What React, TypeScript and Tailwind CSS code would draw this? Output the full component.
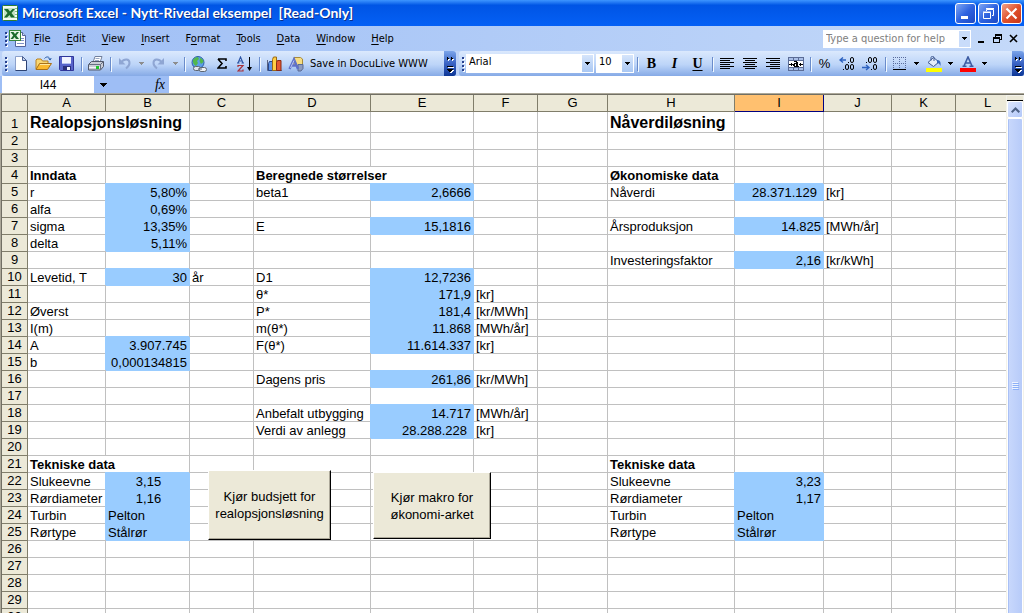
import React from "react";
import { clsx } from "clsx";

const UI = "font-['DejaVu_Sans_Condensed','DejaVu_Sans',sans-serif]";

/* ---------- Small shared pieces ---------- */

function Grip() {
  return (
    <span className="flex w-[4px] shrink-0 flex-col gap-[2px]" aria-hidden="true">
      {[0, 1, 2, 3].map((i) => (
        <span key={i} className="h-[2px] w-[2px] bg-[#27418f] shadow-[1px_1px_0_#ffffff]" />
      ))}
    </span>
  );
}

function Separator() {
  return (
    <span className="flex w-[6px] shrink-0 justify-center" aria-hidden="true">
      <span className="h-[14px] w-px bg-[#6a8ccb] shadow-[1px_1px_0_#f1f9ff]" />
    </span>
  );
}

function Caret({ className }: { className?: string }) {
  return (
    <svg width="5" height="3" viewBox="0 0 5 3" className={className} shapeRendering="crispEdges" aria-hidden="true">
      <path d="M0 0h5v1H4v1H3v1H2V2H1V1H0z" fill="currentColor" />
    </svg>
  );
}

function ToolButton({ label, children }: { label: string; children: React.ReactNode }) {
  return (
    <button type="button" aria-label={label} className="flex h-[22px] w-[23px] shrink-0 items-center justify-center text-black">
      {children}
    </button>
  );
}

function DropButton({ label, dim }: { label: string; dim?: boolean }) {
  return (
    <button
      type="button"
      aria-label={label}
      className={clsx("flex h-[22px] w-[11px] shrink-0 items-center justify-center", dim ? "text-[#8d8d8d]" : "text-black")}
    >
      <Caret />
    </button>
  );
}

function Overflow({ label }: { label: string }) {
  return (
    <button
      type="button"
      aria-label={label}
      className="flex w-[12px] shrink-0 items-center justify-center self-stretch rounded-r-[3px] bg-linear-to-b from-[#7ba4ea] via-[#3a63c4] to-[#0b3696]"
    >
      <svg width="9" height="20" viewBox="0 0 9 20" shapeRendering="crispEdges" aria-hidden="true">
        <path d="M2 4h1v1h1v1H3v1H2zM6 4h1v1h1v1H7v1H6z" fill="#fff" />
        <path d="M1 3h1v1h1v1H2v1H1zM5 3h1v1h1v1H6v1H5z" fill="#000" />
        <path d="M2 13h6v1H2zM2 16h6v1H7v1H6v1H4v-1H3v-1H2z" fill="#fff" />
        <path d="M1 12h6v1H1zM1 15h6v1H6v1H5v1H3v-1H2v-1H1z" fill="#000" />
      </svg>
    </button>
  );
}

/* ---------- Icons ---------- */

function ExcelIcon() {
  return (
    <svg width="16" height="16" viewBox="0 0 16 16" aria-hidden="true">
      <rect x="0.5" y="0.5" width="15" height="15" rx="1" fill="#f4fbf2" stroke="#2f7d32" />
      <path d="M12 3.5h3M12 6.5h3M12 9.5h3M12 12.5h3" stroke="#86b886" />
      <rect x="2" y="3" width="11" height="10" fill="#c5e3c4" />
      <path d="M2 4h4l2 2.500L10.500 4H13L9.500 8l3.500 4.500H9L7.500 10 5 12.500H2L5.500 8z" fill="#1d6b2c" />
    </svg>
  );
}

function WorkbookIcon() {
  return (
    <svg width="18" height="17" viewBox="0 0 18 17" aria-hidden="true">
      <path d="M6.500 2.500h7l3 3v11h-10z" fill="#fff" stroke="#52649c" />
      <path d="M13.500 2.500v3h3" fill="#cdd9f3" stroke="#52649c" />
      <path d="M12 8.500h3M12 10.500h3M8 13.500h7" stroke="#7f92c6" />
      <rect x="0.500" y="0.500" width="11" height="10" fill="#e9f6e6" stroke="#38863c" />
      <path d="M1.500 2h3L6 4l1.800-2H10L7.300 5.500 10 9H7L5.500 7 4 9H1.500l2.700-3.500z" fill="#1d6b2c" />
    </svg>
  );
}

function NewIcon() {
  return (
    <svg width="12" height="15" viewBox="0 0 12 15" aria-hidden="true">
      <path d="M0.5 0.5h7l4 4v10h-11z" fill="#fff" stroke="#8ba0cb" />
      <path d="M11.5 4.5v10h-11" fill="none" stroke="#2c4273" />
      <path d="M7.5 0.5v4h4z" fill="#c3d2ee" stroke="#4a5f91" />
    </svg>
  );
}

function OpenIcon() {
  return (
    <svg width="17" height="15" viewBox="0 0 17 15" aria-hidden="true">
      <path d="M9.5 2.5c2-2.4 5-2 5.5 1M13.500 2.500l1.700 1.500 1-2" fill="none" stroke="#2c5ea8" />
      <path d="M1 13V4l1-1h4l1.500 2H13v3" fill="#f8d775" stroke="#b98121" />
      <path d="M1 13.500L4.500 7.500h12L12.500 13.500z" fill="#fbb92f" stroke="#a8701a" />
      <path d="M5 8.500h10" stroke="#ffe9a4" />
    </svg>
  );
}

function SaveIcon() {
  return (
    <svg width="15" height="15" viewBox="0 0 15 15" aria-hidden="true">
      <path d="M0.500 0.500h14v14h-13l-1-1z" fill="#5763c9" stroke="#30369a" />
      <rect x="3" y="1" width="9" height="7" fill="#f1f3ff" />
      <path d="M3 7.500h9" stroke="#b7c1ee" />
      <rect x="4" y="10" width="8" height="4" fill="#2a2f79" />
      <rect x="8" y="11" width="3" height="3" fill="#f3f5ff" />
    </svg>
  );
}

function PrintIcon() {
  return (
    <svg width="16" height="15" viewBox="0 0 16 15" aria-hidden="true">
      <path d="M5 6.500L7 0.500h7L12 6.500z" fill="#fff" stroke="#72809c" />
      <path d="M7.500 2.500h4M7 4.500h4" stroke="#9aa8c4" />
      <path d="M0.500 8.500l3-3h12v5l-3 3.500H0.500z" fill="#c9cdd6" stroke="#50586a" />
      <path d="M1 8.500h11.500l3-3M12.500 8.500V14" fill="none" stroke="#667083" />
      <path d="M1 11.500h11" stroke="#f3f5fa" />
      <rect x="8" y="10" width="3" height="3" fill="#1fc72a" />
    </svg>
  );
}

function UndoIcon({ flip }: { flip?: boolean }) {
  return (
    <svg width="13" height="13" viewBox="0 0 13 13" aria-hidden="true">
      <g transform={flip ? "translate(13 0) scale(-1 1)" : undefined}>
        <path d="M3 5.500c3-4 8.500-4 8.500 0.500 0 2.500-1.500 4-3.500 5.500" fill="none" stroke="#8fa6d3" strokeWidth="2" />
        <path d="M1 1v6.500h6.500z" fill="#8fa6d3" />
      </g>
    </svg>
  );
}

function GlobeIcon() {
  return (
    <svg width="16" height="16" viewBox="0 0 16 16" aria-hidden="true">
      <circle cx="7" cy="6.500" r="6" fill="#5b9ee8" stroke="#2d5fa6" />
      <path d="M2 4c1-2 3-3 5-3l1 2-2 2 1 2-2 3C3 9 1.500 7 2 4zM9 2c2 .5 3.500 2 3.500 4L10 8 8.500 5z" fill="#52b84c" />
      <rect x="2.500" y="10.500" width="7" height="4" rx="2" fill="#dfe5ef" stroke="#5d6672" strokeWidth="1" />
      <rect x="8" y="11.500" width="7.500" height="4" rx="2" fill="#eef1f6" stroke="#5d6672" strokeWidth="1" />
      <path d="M7 13h4" stroke="#5d6672" />
    </svg>
  );
}

function SumIcon() {
  return (
    <svg width="10" height="11" viewBox="0 0 10 11" aria-hidden="true">
      <path d="M1 1h8v2M9 8v2H1l4-4.500L1 1" fill="none" stroke="#000" strokeWidth="1.600" />
    </svg>
  );
}

function SortIcon() {
  return (
    <svg width="16" height="16" viewBox="0 0 16 16" aria-hidden="true">
      <path d="M1 7L3.500 1 6 7M2 5h3.500M0 7h2.500M4.500 7H7" fill="none" stroke="#2d55a5" strokeWidth="1.100" />
      <path d="M1 11V9.500h5L1 15h5v-1.500" fill="none" stroke="#a8313a" strokeWidth="1.200" />
      <path d="M12.500 1v13" stroke="#000" />
      <path d="M10 11h5l-2.500 4z" fill="#000" />
    </svg>
  );
}

function ChartIcon() {
  return (
    <svg width="16" height="16" viewBox="0 0 16 16" aria-hidden="true">
      <path d="M1.500 4v10.500H16" fill="none" stroke="#5a6482" />
      <path d="M2.500 7.500l1-2h3v9h-4z" fill="#5e93e6" stroke="#27488f" />
      <path d="M6.500 3.500l1-2.500h3v13.500h-4z" fill="#ffcf45" stroke="#9b6a14" />
      <path d="M10.500 6.500l1-2h3.500v10h-4.500z" fill="#e4572e" stroke="#8a2a14" />
    </svg>
  );
}

function ShapesIcon() {
  return (
    <svg width="16" height="16" viewBox="0 0 16 16" aria-hidden="true">
      <path d="M6 1.500h6.500l2 1.500v5l-2 1.500H6z" fill="#f6dd84" stroke="#a88b3a" />
      <path d="M10 8.500h5v4l-2 2.500h-3z" fill="#8d9cc0" stroke="#5a6a94" />
      <path d="M1.500 13L6 3.500 10 13M3.500 9.500h5.500" fill="none" stroke="#5f70c9" strokeWidth="2.400" />
      <path d="M2.500 12L6 4.500" stroke="#b9c5f5" />
    </svg>
  );
}

function Lines({ rows }: { rows: [number, number][] }) {
  return (
    <svg width="14" height="11" viewBox="0 0 14 11" shapeRendering="crispEdges" aria-hidden="true">
      {rows.map(([x, w], i) => (
        <rect key={i} x={x} y={i * 2} width={w} height="1" fill="#000" />
      ))}
    </svg>
  );
}

function MergeIcon() {
  return (
    <svg width="16" height="14" viewBox="0 0 16 14" shapeRendering="crispEdges" aria-hidden="true">
      <rect x="0" y="0" width="16" height="14" fill="#a9bfe8" />
      <path d="M0 0.500h16M0 13.500h16M0.500 0v14M15.500 0v14M5.500 0v3M10.500 0v3M5.500 11v3M10.500 11v3M0 3.500h16M0 10.500h16" stroke="#5b6c96" />
      <rect x="1" y="4" width="14" height="6" fill="#fff" />
      <path d="M1 7h4v1H1zM3 6h1v3H3zM11 7h4v1h-4zM12 6h1v3h-1z" fill="#000" />
      <path d="M6 4h3v1H6zM8 5h2v4H8zM6 6h2v1H6zM5 7h2v2H5zM6 9h5v1H6z" fill="#000" />
    </svg>
  );
}

function DecimalIcon({ less }: { less?: boolean }) {
  return (
    <svg width="17" height="14" viewBox="0 0 17 14" aria-hidden="true">
      {less ? (
        <>
          <path d="M0 10.500h6M4 8l3 2.500L4 13" fill="none" stroke="#2d62c0" strokeWidth="1.400" />
          <rect x="4" y="5" width="1" height="1" />
          <rect x="6.500" y="0.500" width="3" height="5" rx="1.500" fill="none" stroke="#000" />
          <rect x="11.500" y="0.500" width="3" height="5" rx="1.500" fill="none" stroke="#000" />
          <rect x="9" y="12" width="1" height="1" />
          <rect x="11.500" y="7.500" width="3" height="5" rx="1.500" fill="none" stroke="#000" />
        </>
      ) : (
        <>
          <path d="M1 3h6M4 0.500L1 3l3 2.500" fill="none" stroke="#2d62c0" strokeWidth="1.400" />
          <rect x="9" y="5" width="1" height="1" />
          <rect x="11.500" y="0.500" width="3" height="5" rx="1.500" fill="none" stroke="#000" />
          <rect x="4" y="12" width="1" height="1" />
          <rect x="6.500" y="7.500" width="3" height="5" rx="1.500" fill="none" stroke="#000" />
          <rect x="11.500" y="7.500" width="3" height="5" rx="1.500" fill="none" stroke="#000" />
        </>
      )}
    </svg>
  );
}

function BordersIcon() {
  return (
    <svg width="13" height="13" viewBox="0 0 13 13" shapeRendering="crispEdges" aria-hidden="true">
      <path d="M0 0.500h13M0 6.500h13M0.500 0v12M6.500 0v12M12.500 0v12" stroke="#5a6c9c" strokeDasharray="1 1" />
      <path d="M0 12.500h13" stroke="#000" />
    </svg>
  );
}

function FillIcon() {
  return (
    <svg width="16" height="16" viewBox="0 0 16 16" aria-hidden="true">
      <path d="M2 6.500L7.500 1.500 13 6 7.500 10.500z" fill="#e3ecfb" stroke="#3f588f" />
      <path d="M5 4.500V1.500c0-1.500 3-1.500 3 0V5" fill="none" stroke="#3f588f" />
      <path d="M11 4c3 0 4 2 3.500 6-1-2-1.500-3-3.500-3z" fill="#3567bd" />
      <rect x="0" y="12" width="16" height="4" fill="#ffff00" />
    </svg>
  );
}

function FontColorIcon() {
  return (
    <svg width="16" height="16" viewBox="0 0 16 16" aria-hidden="true">
      <path d="M4 10L8 1l4 9M5.500 7h5M2.500 10.200h4M9.500 10.200h4" fill="none" stroke="#3c5ba2" strokeWidth="1.600" />
      <rect x="0" y="12" width="16" height="4" fill="#ff0000" />
    </svg>
  );
}

/* ---------- Window chrome ---------- */

function CaptionButton({ label, close, children }: { label: string; close?: boolean; children: React.ReactNode }) {
  return (
    <button
      type="button"
      aria-label={label}
      className={clsx(
        "flex h-[21px] w-[21px] items-center justify-center rounded-[3px] border border-white bg-linear-to-br",
        close ? "from-[#f0a188] via-[#e0512b] to-[#c8361a]" : "from-[#7fa5f3] via-[#2f63e0] to-[#1c48c4]",
      )}
    >
      <svg width="15" height="15" viewBox="0 0 15 15" aria-hidden="true">
        {children}
      </svg>
    </button>
  );
}

function TitleBar() {
  return (
    <header className="flex h-[26px] shrink-0 items-center gap-[4px] bg-linear-to-b from-[#3d95ff] via-[#0055e5] via-20% to-[#0560f5] pr-[2px] pl-[2px]">
      <ExcelIcon />
      <h1 className="flex-1 truncate font-['Lato','Open_Sans',sans-serif] text-[14px] leading-[20px] font-bold whitespace-pre text-white [text-shadow:1px_1px_0_#0b2f8a]">
        {"Microsoft Excel - Nytt-Rivedal eksempel  [Read-Only]"}
      </h1>
      <div className="flex gap-[2px]">
        <CaptionButton label="Minimize">
          <path d="M3 10h7v3H3z" fill="#fff" />
        </CaptionButton>
        <CaptionButton label="Restore">
          <path d="M5.500 5V3.500h7v6H11M5 2.500h8" fill="none" stroke="#fff" />
          <path d="M2.500 6.500h7v6h-7zM2 6h8" fill="none" stroke="#fff" />
        </CaptionButton>
        <CaptionButton label="Close" close>
          <path d="M2.500 2.500l10 10M12.500 2.500l-10 10" stroke="#fff" strokeWidth="2.200" />
        </CaptionButton>
      </div>
    </header>
  );
}

const MENUS: [string, string, string][] = [
  ["", "F", "ile"],
  ["", "E", "dit"],
  ["", "V", "iew"],
  ["", "I", "nsert"],
  ["F", "o", "rmat"],
  ["", "T", "ools"],
  ["", "D", "ata"],
  ["", "W", "indow"],
  ["", "H", "elp"],
];

function MenuBar() {
  return (
    <div className="flex h-[25px] shrink-0 items-center bg-linear-to-r from-[#9ebef5] to-[#c4d9f9] pr-[3px] pl-[5px]">
      <Grip />
      <WorkbookIcon />
      <nav className="ml-[7px] flex flex-1 gap-[16px]">
        {MENUS.map(([pre, key, post]) => (
          <button key={pre + key + post} type="button" className="text-[11px] leading-[16px] text-black">
            {pre}
            <span className="underline underline-offset-2">{key}</span>
            {post}
          </button>
        ))}
      </nav>
      <div className="flex h-[18px] w-[148px] border border-white bg-white">
        <input
          type="text"
          aria-label="Type a question for help"
          placeholder="Type a question for help"
          className="min-w-0 flex-1 pl-[2px] text-[11px] leading-[16px] text-black outline-none placeholder:text-[#808080]"
        />
        <button type="button" aria-label="Show questions" className="flex w-[11px] items-center justify-center bg-[#c9dcfa]">
          <Caret />
        </button>
      </div>
      <div className="ml-[2px] flex">
        <button type="button" aria-label="Minimize workbook" className="flex h-4 w-[16px] items-center justify-center">
          <svg width="9" height="9" viewBox="0 0 9 9" aria-hidden="true">
            <path d="M1 7h6v2H1z" />
          </svg>
        </button>
        <button type="button" aria-label="Restore workbook" className="flex h-4 w-[16px] items-center justify-center">
          <svg width="9" height="9" viewBox="0 0 9 9" shapeRendering="crispEdges" aria-hidden="true">
            <path d="M2 0h7v6H7V5h1V2H3v1H2zM0 3h7v6H0zm1 2v3h5V5z" fillRule="evenodd" />
          </svg>
        </button>
        <button type="button" aria-label="Close workbook" className="flex h-4 w-[16px] items-center justify-center">
          <svg width="9" height="9" viewBox="0 0 9 9" aria-hidden="true">
            <path d="M1 1l7 7M8 1L1 8" stroke="#000" strokeWidth="1.600" />
          </svg>
        </button>
      </div>
    </div>
  );
}

function Combo({ label, value, options, className }: { label: string; value: string; options: string[]; className: string }) {
  return (
    <div className={clsx("relative flex h-[19px] shrink-0 bg-white", className)}>
      <select
        aria-label={label}
        defaultValue={value}
        className="h-[16px] w-full appearance-none bg-transparent pl-[3px] font-['DejaVu_Sans_Condensed'] text-[11px] text-black outline-none"
      >
        {options.map((o) => (
          <option key={o}>{o}</option>
        ))}
      </select>
      <span className="pointer-events-none absolute inset-y-px right-px flex w-[11px] items-center justify-center bg-linear-to-b from-[#d6e5fb] to-[#a9c7f3]">
        <Caret />
      </span>
    </div>
  );
}

const BAR = "flex h-[25px] items-center rounded-[3px] bg-linear-to-b from-[#dbe9fd] via-[#bcd4f8] via-55% to-[#86aae6]";

function Toolbars() {
  return (
    <div className="flex h-[25px] shrink-0 gap-[3px] bg-[#bdd3f8] pl-[2px]">
      <div className={clsx(BAR, "w-[454px] shrink-0 pl-[3px]")} role="toolbar" aria-label="Standard">
        <Grip />
        <ToolButton label="New"><NewIcon /></ToolButton>
        <ToolButton label="Open"><OpenIcon /></ToolButton>
        <ToolButton label="Save"><SaveIcon /></ToolButton>
        <Separator />
        <ToolButton label="Print"><PrintIcon /></ToolButton>
        <Separator />
        <ToolButton label="Undo"><UndoIcon /></ToolButton>
        <DropButton label="Undo list" dim />
        <ToolButton label="Redo"><UndoIcon flip /></ToolButton>
        <DropButton label="Redo list" dim />
        <Separator />
        <ToolButton label="Insert hyperlink"><GlobeIcon /></ToolButton>
        <ToolButton label="AutoSum"><SumIcon /></ToolButton>
        <ToolButton label="Sort ascending"><SortIcon /></ToolButton>
        <Separator />
        <ToolButton label="Chart wizard"><ChartIcon /></ToolButton>
        <button type="button" className="flex h-[22px] items-center gap-[6px] pl-[3px] text-[11px] leading-[16px] whitespace-nowrap text-black">
          <ShapesIcon />
          Save in DocuLive WWW
        </button>
        <span className="flex-1" />
        <Overflow label="Standard toolbar options" />
      </div>
      <div className={clsx(BAR, "min-w-0 flex-1 pl-[3px]")} role="toolbar" aria-label="Formatting">
        <Grip />
        <Combo label="Font" value="Arial" options={["Arial", "Tahoma", "Times New Roman"]} className="w-[128px]" />
        <Combo label="Font size" value="10" options={["8", "9", "10", "11", "12"]} className="ml-[2px] w-[38px]" />
        <Separator />
        <ToolButton label="Bold">
          <span className="font-['Liberation_Serif',serif] text-[14px] leading-[16px] font-bold">B</span>
        </ToolButton>
        <ToolButton label="Italic">
          <span className="font-['Liberation_Serif',serif] text-[14px] leading-[16px] font-bold italic">I</span>
        </ToolButton>
        <ToolButton label="Underline">
          <span className="font-['Liberation_Serif',serif] text-[14px] leading-[16px] font-bold underline underline-offset-2">U</span>
        </ToolButton>
        <Separator />
        <ToolButton label="Align left"><Lines rows={[[0, 14], [0, 10], [0, 14], [0, 10], [0, 14], [0, 10]]} /></ToolButton>
        <ToolButton label="Center"><Lines rows={[[0, 14], [2, 10], [0, 14], [2, 10], [0, 14], [2, 10]]} /></ToolButton>
        <ToolButton label="Align right"><Lines rows={[[0, 14], [4, 10], [0, 14], [4, 10], [0, 14], [4, 10]]} /></ToolButton>
        <ToolButton label="Merge and center"><MergeIcon /></ToolButton>
        <Separator />
        <ToolButton label="Percent style">
          <span className="font-['Liberation_Sans',sans-serif] text-[13px] leading-[16px]">%</span>
        </ToolButton>
        <ToolButton label="Increase decimal"><DecimalIcon /></ToolButton>
        <ToolButton label="Decrease decimal"><DecimalIcon less /></ToolButton>
        <Separator />
        <ToolButton label="Borders"><BordersIcon /></ToolButton>
        <DropButton label="Border styles" />
        <ToolButton label="Fill color"><FillIcon /></ToolButton>
        <DropButton label="Fill colors" />
        <ToolButton label="Font color"><FontColorIcon /></ToolButton>
        <DropButton label="Font colors" />
        <span className="flex-1" />
        <Overflow label="Formatting toolbar options" />
      </div>
    </div>
  );
}

function FormulaBar() {
  return (
    <div className="flex h-[17px] shrink-0 bg-[#9ebef5] pl-[2px] font-['Liberation_Sans',sans-serif]">
      <input
        type="text"
        aria-label="Name box"
        defaultValue="I44"
        className="w-[92px] shrink-0 bg-white text-center text-[12px] leading-[16px] text-black outline-none"
      />
      <button type="button" aria-label="Named ranges" className="flex w-[19px] shrink-0 items-center justify-center text-black">
        <svg width="7" height="4" viewBox="0 0 7 4" shapeRendering="crispEdges" aria-hidden="true">
          <path d="M0 0h7v1H6v1H5v1H4v1H3V3H2V2H1V1H0z" />
        </svg>
      </button>
      <button
        type="button"
        aria-label="Insert function"
        className="ml-[38px] w-[18px] shrink-0 text-center font-['Liberation_Serif',serif] text-[14px] leading-[16px] text-black italic"
      >
        fx
      </button>
      <input type="text" aria-label="Formula" className="min-w-0 flex-1 bg-white text-[12px] outline-none" />
    </div>
  );
}

/* ---------- Sheet ---------- */

const COLUMNS: { id: string; width: string }[] = [
  { id: "A", width: "w-[78px]" },
  { id: "B", width: "w-[84px]" },
  { id: "C", width: "w-[64px]" },
  { id: "D", width: "w-[117px]" },
  { id: "E", width: "w-[103px]" },
  { id: "F", width: "w-[64px]" },
  { id: "G", width: "w-[70px]" },
  { id: "H", width: "w-[127px]" },
  { id: "I", width: "w-[89px]" },
  { id: "J", width: "w-[68px]" },
  { id: "K", width: "w-[64px]" },
  { id: "L", width: "w-[64px]" },
];

type Cell = { text: string; kind?: "title" | "bold"; fill?: boolean; align?: "right" | "center" | "padded"; span?: number };

const right = (text: string): Cell => ({ text, fill: true, align: "right" });
const padded = (text: string): Cell => ({ text, fill: true, align: "padded" });
const center = (text: string): Cell => ({ text, fill: true, align: "center" });
const left = (text: string): Cell => ({ text, fill: true });
const t = (text: string): Cell => ({ text });
const bold = (text: string, span?: number): Cell => ({ text, kind: "bold", span });

const CELLS: Record<string, Cell> = {
  A1: { text: "Realopsjonsløsning", kind: "title", span: 2 },
  H1: { text: "Nåverdiløsning", kind: "title" },
  A4: bold("Inndata"),
  D4: bold("Beregnede størrelser", 2),
  H4: bold("Økonomiske data"),
  A5: t("r"), B5: right("5,80%"), D5: t("beta1"), E5: right("2,6666"),
  H5: t("Nåverdi"), I5: padded("28.371.129"), J5: t("[kr]"),
  A6: t("alfa"), B6: right("0,69%"),
  A7: t("sigma"), B7: right("13,35%"), D7: t("E"), E7: right("15,1816"),
  H7: t("Årsproduksjon"), I7: right("14.825"), J7: t("[MWh/år]"),
  A8: t("delta"), B8: right("5,11%"),
  H9: t("Investeringsfaktor"), I9: right("2,16"), J9: t("[kr/kWh]"),
  A10: t("Levetid, T"), B10: right("30"), C10: t("år"), D10: t("D1"), E10: right("12,7236"),
  D11: t("θ*"), E11: right("171,9"), F11: t("[kr]"),
  A12: t("Øverst"), D12: t("P*"), E12: right("181,4"), F12: t("[kr/MWh]"),
  A13: t("I(m)"), D13: t("m(θ*)"), E13: right("11.868"), F13: t("[MWh/år]"),
  A14: t("A"), B14: right("3.907.745"), D14: t("F(θ*)"), E14: right("11.614.337"), F14: t("[kr]"),
  A15: t("b"), B15: right("0,000134815"),
  D16: t("Dagens pris"), E16: right("261,86"), F16: t("[kr/MWh]"),
  D18: t("Anbefalt utbygging"), E18: right("14.717"), F18: t("[MWh/år]"),
  D19: t("Verdi av anlegg"), E19: padded("28.288.228"), F19: t("[kr]"),
  A21: bold("Tekniske data", 2), H21: bold("Tekniske data"),
  A22: t("Slukeevne"), B22: center("3,15"), H22: t("Slukeevne"), I22: right("3,23"),
  A23: t("Rørdiameter"), B23: center("1,16"), H23: t("Rørdiameter"), I23: right("1,17"),
  A24: t("Turbin"), B24: left("Pelton"), H24: t("Turbin"), I24: left("Pelton"),
  A25: t("Rørtype"), B25: left("Stålrør"), H25: t("Rørtype"), I25: left("Stålrør"),
};

const ROWS = Array.from({ length: 30 }, (_, i) => i + 1);

function SheetRow({ row }: { row: number }) {
  const cells: React.ReactNode[] = [];
  for (let c = 0; c < COLUMNS.length; c++) {
    const id = COLUMNS[c].id + row;
    const cell = CELLS[id];
    const span = cell?.span ?? 1;
    cells.push(
      <td
        key={id}
        colSpan={span}
        className={clsx(
          "border-r border-b p-0 pl-[2px] align-bottom whitespace-nowrap",
          cell?.fill ? "border-[#99ccff] bg-[#99ccff] shadow-[-1px_-1px_0_#99ccff]" : "border-[#c0c0c0]",
          cell?.align === "right" && "pr-[2px] text-right",
          cell?.align === "padded" && "pr-[6px] text-right",
          cell?.align === "center" && "text-center",
          cell?.kind === "title" ? "text-[16px] leading-[19px] font-bold" : "leading-[14px]",
          cell?.kind === "bold" && "font-bold",
        )}
      >
        {cell?.text}
      </td>,
    );
    c += span - 1;
  }
  return (
    <tr className={row === 1 ? "h-[21px]" : "h-[17px]"}>
      <th scope="row" className="border-r border-b border-[#807d6a] bg-[#ece9d8] p-0 text-center align-bottom font-normal">
        {row}
      </th>
      {cells}
    </tr>
  );
}

function MacroButton({ className, lines }: { className: string; lines: [string, string] }) {
  return (
    <button
      type="button"
      className={clsx(
        "absolute border-t border-r border-b border-l border-t-white border-r-black border-b-black border-l-white bg-[#ece9d8] text-[13px] leading-[17px] text-black shadow-[inset_-1px_-1px_0_#aca899]",
        className,
      )}
    >
      {lines[0]}
      <br />
      {lines[1]}
    </button>
  );
}

function Sheet() {
  return (
    <main className="flex min-h-0 flex-1 border-t border-l border-[#aca899] font-['Liberation_Sans',sans-serif]">
      <div className="relative min-w-0 flex-1 overflow-hidden border-t border-l border-[#716f64] bg-white">
        <table className="w-max table-fixed border-separate border-spacing-0 text-[13px] leading-[16px] text-black">
          <colgroup>
            <col className="w-[26px]" />
            {COLUMNS.map((c) => (
              <col key={c.id} className={c.width} />
            ))}
          </colgroup>
          <thead>
            <tr className="h-[17px]">
              <td className="border-r border-b border-[#807d6a] bg-[#ece9d8] p-0" />
              {COLUMNS.map((c) => (
                <th
                  key={c.id}
                  scope="col"
                  className={clsx(
                    "border-r border-b p-0 text-center font-normal",
                    c.id === "I" ? "border-[#000080] bg-[#ffc06f]" : "border-[#807d6a] bg-[#ece9d8]",
                  )}
                >
                  {c.id}
                </th>
              ))}
            </tr>
          </thead>
          <tbody>
            {ROWS.map((row) => (
              <SheetRow key={row} row={row} />
            ))}
          </tbody>
        </table>
        <MacroButton className="top-[375px] left-[206px] h-[70px] w-[123px]" lines={["Kjør budsjett for", "realopsjonsløsning"]} />
        <MacroButton className="top-[377px] left-[371px] h-[67px] w-[118px]" lines={["Kjør makro for", "økonomi-arket"]} />
      </div>
      <div className="flex w-[18px] shrink-0 flex-col border-t border-[#716f64] bg-[#f3f2ea] px-px">
        <div className="mt-px h-[5px] shrink-0 border-b border-black bg-[#ece9d8]" />
        <button
          type="button"
          aria-label="Scroll up"
          className="flex h-[17px] shrink-0 items-center justify-center rounded-[2px] border border-white bg-linear-to-br from-[#dbe5fe] to-[#b3c8f8]"
        >
          <svg width="9" height="6" viewBox="0 0 9 6" aria-hidden="true">
            <path d="M0.700 5.300L4.500 1.500l3.800 3.800" fill="none" stroke="#4d6185" strokeWidth="2" />
          </svg>
        </button>
        <button
          type="button"
          aria-label="Scroll position"
          className="flex flex-1 items-center justify-center rounded-t-[2px] border-x border-t border-white bg-linear-to-r from-[#c9d8fc] to-[#b7cbf9] pt-10 shadow-[inset_1px_0_0_#a9c0f5]"
        >
          <svg width="7" height="8" viewBox="0 0 7 8" shapeRendering="crispEdges" aria-hidden="true">
            <path d="M0 0.500h6M0 2.500h6M0 4.500h6M0 6.500h6" stroke="#eef4fe" />
            <path d="M1 1.500h6M1 3.500h6M1 5.500h6M1 7.500h6" stroke="#8cb0f8" />
          </svg>
        </button>
      </div>
    </main>
  );
}

export default function App() {
  return (
    <div className={clsx("flex h-screen flex-col overflow-hidden bg-[#9ebef5]", UI)}>
      <TitleBar />
      <MenuBar />
      <Toolbars />
      <FormulaBar />
      <Sheet />
    </div>
  );
}
